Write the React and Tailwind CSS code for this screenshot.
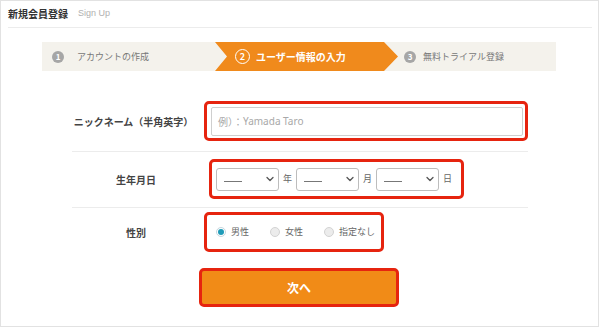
import React from "react";

const jp = "font-['Noto_Sans_CJK_JP','Noto_Sans',sans-serif]";

function Chevron() {
  return (
    <svg width="8" height="6" viewBox="0 0 8 6" className="shrink-0">
      <path d="M1 1.5 L4 4.5 L7 1.5" fill="none" stroke="#555" strokeWidth="1.3" strokeLinecap="round" strokeLinejoin="round" />
    </svg>
  );
}

function FakeSelect() {
  return (
    <div className="flex h-[23px] w-[63px] shrink-0 items-center justify-between rounded-[3px] border border-[#bdbdbd] bg-white pl-[7px] pr-[4px]">
      <span className="mt-[4px] block h-px w-[18px] bg-[#777]" />
      <Chevron />
    </div>
  );
}

function Radio({ checked, label, ml }) {
  return (
    <div className={`flex shrink-0 items-center whitespace-nowrap ${ml}`}>
      {checked ? (
        <span className="flex h-[10px] w-[10px] shrink-0 items-center justify-center rounded-full border border-[#c6d6de] bg-white">
          <span className="h-[6px] w-[6px] rounded-full bg-[#1f9bb8]" />
        </span>
      ) : (
        <span className="h-[10px] w-[10px] shrink-0 rounded-full border border-[#d3d3d3] bg-[#ececec]" />
      )}
      <span className="ml-[5px] whitespace-nowrap text-[9px] text-[#666]">{label}</span>
    </div>
  );
}

export default function App() {
  return (
    <div className={`${jp} h-[327px] w-[600px] bg-white`}>
      <div className="h-[327px] w-[599px] border border-[#e2e2e2] bg-white">
        {/* header */}
        <div className="ml-[7px] mr-[6px] flex h-[27px] items-center border-b border-[#ececec] pb-[1px]">
          <span className="text-[10px] font-bold text-[#333]">新規会員登録</span>
          <span className="ml-[10px] font-['Liberation_Sans',sans-serif] text-[9px] text-[#b0b0b0]">Sign Up</span>
        </div>

        {/* steps */}
        <div className="ml-[41px] mt-[14px] flex h-[29px] w-[514px] bg-[#f4f2ec]">
          <div className="flex w-[173px] items-center pl-[10px]">
            <span className="flex h-[12px] w-[12px] items-center justify-center rounded-full bg-[#a6a6a6] text-[8px] font-bold leading-none text-white">1</span>
            <span className="ml-[13px] text-[9px] text-[#777]">アカウントの作成</span>
          </div>
          <div className="flex w-[183px] items-center bg-[#f08a1c] pl-[20px] [clip-path:polygon(0_0,169px_0,183px_50%,169px_100%,0_100%,12px_50%)]">
            <span className="flex h-[15px] w-[15px] items-center justify-center rounded-full border-[1.5px] border-white text-[9px] font-bold leading-none text-white">2</span>
            <span className="ml-[6px] text-[10px] font-bold text-white">ユーザー情報の入力</span>
          </div>
          <div className="flex flex-1 items-center pl-[6px]">
            <span className="flex h-[12px] w-[12px] items-center justify-center rounded-full bg-[#a6a6a6] text-[8px] font-bold leading-none text-white">3</span>
            <span className="ml-[7px] text-[9px] text-[#777]">無料トライアル登録</span>
          </div>
        </div>

        {/* form */}
        <div className="ml-[71px] w-[456px]">
          {/* row 1 */}
          <div className="flex items-center border-b border-[#ececec] pb-[10px] pt-[30px]">
            <div className="w-[128px] text-center text-[10px] font-bold text-[#444]">ニックネーム（半角英字）</div>
            <div className="ml-[9px] flex h-[40px] w-[324px] shrink-0 items-center rounded-[5px] border-[3px] border-[#e6240f] pl-[4px]">
              <div className="flex h-[29px] w-[312px] items-center rounded-[2px] border border-[#cfcfcf] bg-white pl-[6px] text-[10px] text-[#a8a8a8]">
                例）：<span className="font-['Noto_Sans',sans-serif]">Yamada Taro</span>
              </div>
            </div>
          </div>

          {/* row 2 */}
          <div className="flex items-center border-b border-[#ececec] pb-[8px] pt-[7px]">
            <div className="w-[128px] text-center text-[10px] font-bold text-[#444]">生年月日</div>
            <div className="ml-[9px] flex h-[40px] w-[255px] shrink-0 items-center rounded-[5px] border-[3px] border-[#e6240f] pl-[4px]">
              <FakeSelect />
              <span className="ml-[4px] mr-[4px] text-[9px] text-[#666]">年</span>
              <FakeSelect />
              <span className="ml-[4px] mr-[4px] text-[9px] text-[#666]">月</span>
              <FakeSelect />
              <span className="ml-[4px] text-[9px] text-[#666]">日</span>
            </div>
          </div>

          {/* row 3 */}
          <div className="flex items-center pt-[4px]">
            <div className="w-[128px] text-center text-[10px] font-bold text-[#444]">性別</div>
            <div className="ml-[4px] flex h-[40px] w-[180px] shrink-0 items-center rounded-[5px] border-[3px] border-[#e6240f] pl-[9px]">
              <Radio checked label="男性" ml="" />
              <Radio label="女性" ml="ml-[21px]" />
              <Radio label="指定なし" ml="ml-[21px]" />
            </div>
          </div>

          {/* button */}
          <div className="mt-[16px] flex">
            <div className="w-[128px]" />
            <div className="-ml-[1px] flex h-[39px] w-[200px] shrink-0 items-center justify-center rounded-[5px] border-[3px] border-[#e6240f] bg-[#f18b17]">
              <span className="text-[12px] font-bold text-white">次へ</span>
            </div>
          </div>
        </div>
      </div>
    </div>
  );
}
